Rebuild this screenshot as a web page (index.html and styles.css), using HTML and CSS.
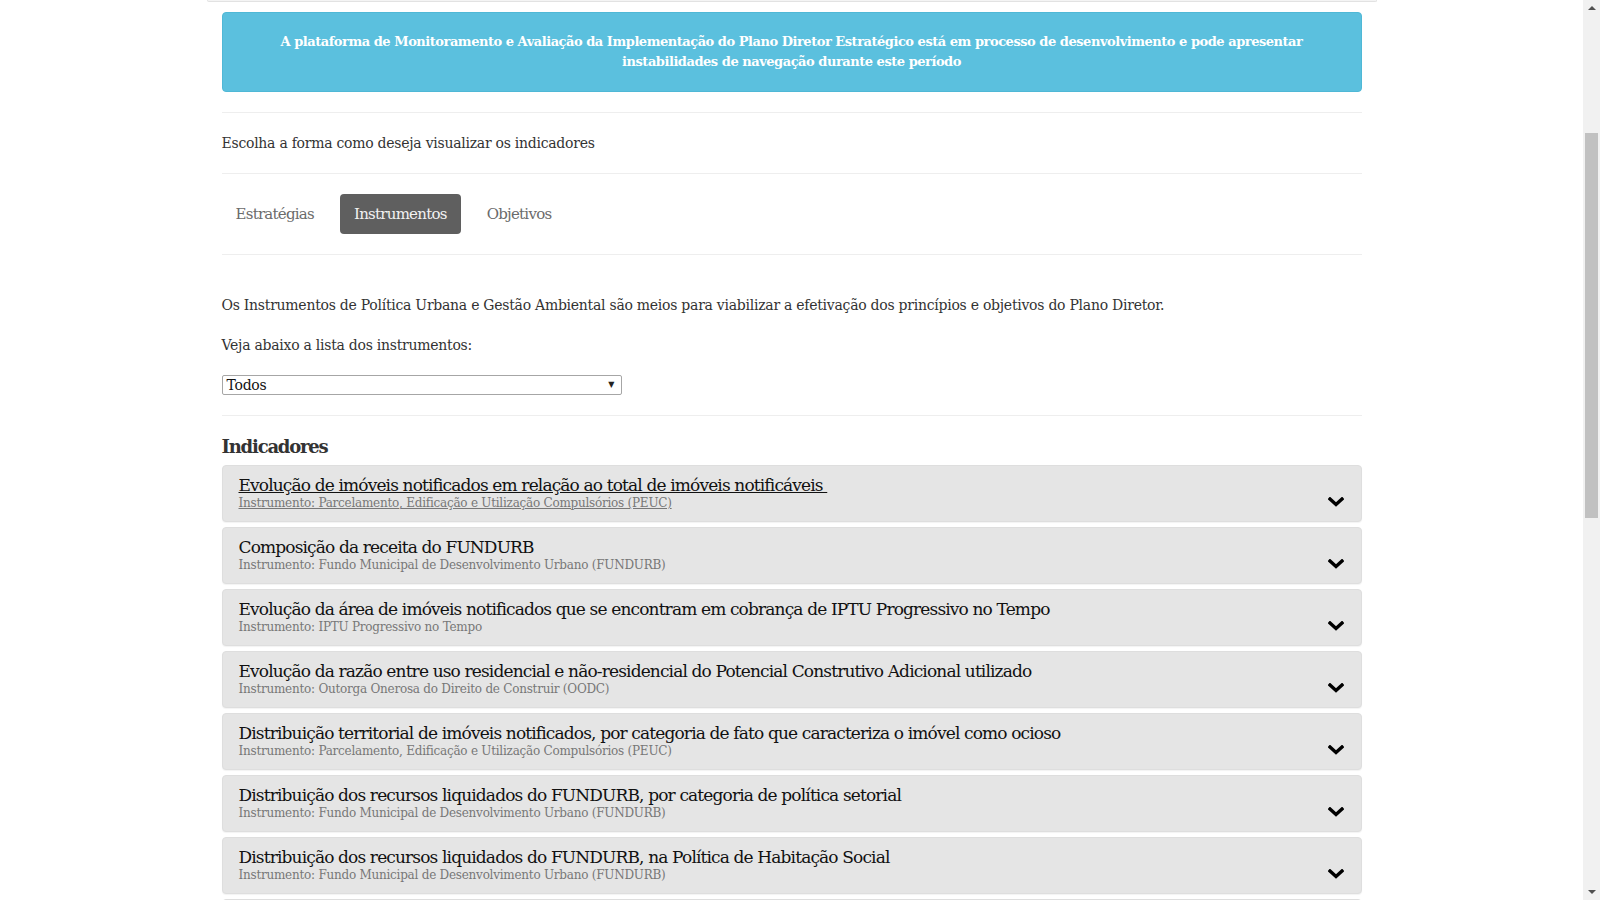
FILE: index.html
```html
<!DOCTYPE html>
<html lang="pt-BR">
<head>
<meta charset="utf-8">
<title>Monitoramento PDE</title>
<link rel="stylesheet" href="styles.css">
</head>
<body>
<div class="page">
  <main class="main">
    <div class="container">
      <div class="topline"></div>
      <div class="content">
        <div class="alert">A plataforma de Monitoramento e Avaliação da Implementação do Plano Diretor Estratégico está em processo de desenvolvimento e pode apresentar<br>instabilidades de navegação durante este período</div>
        <hr>
        <p class="lead">Escolha a forma como deseja visualizar os indicadores</p>
        <hr>
        <ul class="pills">
          <li class="pill">Estratégias</li>
          <li class="pill active">Instrumentos</li>
          <li class="pill">Objetivos</li>
        </ul>
        <hr>
        <div class="intro">
          <p>Os Instrumentos de Política Urbana e Gestão Ambiental são meios para viabilizar a efetivação dos princípios e objetivos do Plano Diretor.</p>
          <p>Veja abaixo a lista dos instrumentos:</p>
          <div class="select"><span>Todos</span><span class="caret">▼</span></div>
        </div>
        <hr>
        <h3 class="heading">Indicadores</h3>
        <div class="panels">
          <div class="panel hover">
            <div class="panel-text">
              <div class="title">Evolução de imóveis notificados em relação ao total de imóveis notificáveis&nbsp;</div>
              <div class="sub">Instrumento: Parcelamento, Edificação e Utilização Compulsórios (PEUC)</div>
            </div>
            <svg class="chev" width="16" height="10" viewBox="0 0 16 10"><polyline points="2,2 8,7.5 14,2" fill="none" stroke="#000" stroke-width="3.4" stroke-linecap="square"/></svg>
          </div>
          <div class="panel">
            <div class="panel-text">
              <div class="title">Composição da receita do FUNDURB</div>
              <div class="sub">Instrumento: Fundo Municipal de Desenvolvimento Urbano (FUNDURB)</div>
            </div>
            <svg class="chev" width="16" height="10" viewBox="0 0 16 10"><polyline points="2,2 8,7.5 14,2" fill="none" stroke="#000" stroke-width="3.4" stroke-linecap="square"/></svg>
          </div>
          <div class="panel">
            <div class="panel-text">
              <div class="title">Evolução da área de imóveis notificados que se encontram em cobrança de IPTU Progressivo no Tempo</div>
              <div class="sub">Instrumento: IPTU Progressivo no Tempo</div>
            </div>
            <svg class="chev" width="16" height="10" viewBox="0 0 16 10"><polyline points="2,2 8,7.5 14,2" fill="none" stroke="#000" stroke-width="3.4" stroke-linecap="square"/></svg>
          </div>
          <div class="panel">
            <div class="panel-text">
              <div class="title">Evolução da razão entre uso residencial e não-residencial do Potencial Construtivo Adicional utilizado</div>
              <div class="sub">Instrumento: Outorga Onerosa do Direito de Construir (OODC)</div>
            </div>
            <svg class="chev" width="16" height="10" viewBox="0 0 16 10"><polyline points="2,2 8,7.5 14,2" fill="none" stroke="#000" stroke-width="3.4" stroke-linecap="square"/></svg>
          </div>
          <div class="panel">
            <div class="panel-text">
              <div class="title">Distribuição territorial de imóveis notificados, por categoria de fato que caracteriza o imóvel como ocioso</div>
              <div class="sub">Instrumento: Parcelamento, Edificação e Utilização Compulsórios (PEUC)</div>
            </div>
            <svg class="chev" width="16" height="10" viewBox="0 0 16 10"><polyline points="2,2 8,7.5 14,2" fill="none" stroke="#000" stroke-width="3.4" stroke-linecap="square"/></svg>
          </div>
          <div class="panel">
            <div class="panel-text">
              <div class="title">Distribuição dos recursos liquidados do FUNDURB, por categoria de política setorial</div>
              <div class="sub">Instrumento: Fundo Municipal de Desenvolvimento Urbano (FUNDURB)</div>
            </div>
            <svg class="chev" width="16" height="10" viewBox="0 0 16 10"><polyline points="2,2 8,7.5 14,2" fill="none" stroke="#000" stroke-width="3.4" stroke-linecap="square"/></svg>
          </div>
          <div class="panel">
            <div class="panel-text">
              <div class="title">Distribuição dos recursos liquidados do FUNDURB, na Política de Habitação Social</div>
              <div class="sub">Instrumento: Fundo Municipal de Desenvolvimento Urbano (FUNDURB)</div>
            </div>
            <svg class="chev" width="16" height="10" viewBox="0 0 16 10"><polyline points="2,2 8,7.5 14,2" fill="none" stroke="#000" stroke-width="3.4" stroke-linecap="square"/></svg>
          </div>
          <div class="panel empty"></div>
        </div>
      </div>
    </div>
  </main>
  <div class="scrollbar">
    <div class="sb-arrow up"></div>
    <div class="sb-track"><div class="sb-thumb"></div></div>
    <div class="sb-arrow down"></div>
  </div>
</div>
</body>
</html>
```
FILE: styles.css
```css
* { box-sizing: border-box; }
html, body {
  margin: 0;
  padding: 0;
  height: 900px;
  overflow: hidden;
  background: #fff;
}
body {
  font-family: "DejaVu Serif", "Liberation Serif", serif;
  font-size: 14px;
  line-height: 20px;
  color: #333;
  letter-spacing: -0.26px;
}
.page {
  display: flex;
  height: 900px;
}
.main {
  flex: 1;
  overflow: hidden;
}
.container {
  width: 1170px;
  margin: 0 auto;
}
.topline {
  height: 2px;
  border: 1px solid #e2e2e2;
  border-top: none;
  border-radius: 0 0 2px 2px;
  background: #f4f4f4;
}
.content {
  padding: 10px 15px 0;
}
.alert {
  background: #5bc0de;
  border: 1px solid #4fb8d6;
  border-radius: 4px;
  color: #fff;
  font-weight: bold;
  font-size: 13px;
  letter-spacing: -0.47px;
  text-align: center;
  padding: 19px 15px;
  line-height: 20px;
}
hr {
  border: 0;
  border-top: 1px solid #eee;
  margin: 20px 0;
}
p { margin: 0; }
.lead { margin: 0; }
.pills {
  list-style: none;
  margin: 0;
  padding: 0;
  display: flex;
  gap: 12px;
}
.pill {
  padding: 10px 14px;
  font-size: 15px;
  line-height: 20px;
  color: #6b6b6b;
  border-radius: 4px;
  letter-spacing: -0.75px;
}
.pill.active {
  background: #5f5f5f;
  color: #f2f2f2;
}
.intro {
  padding-top: 20px;
  display: flex;
  flex-direction: column;
  gap: 20px;
}
.intro p { margin: 0; }
.select {
  width: 400px;
  height: 20px;
  border: 1px solid #a6a6a6;
  border-radius: 2px;
  display: flex;
  justify-content: space-between;
  align-items: center;
  padding: 0 6px 0 4px;
  font-size: 14px;
  color: #111;
}
.caret {
  font-size: 8px;
  color: #222;
  letter-spacing: 0;
}
.heading {
  font-size: 18px;
  font-weight: bold;
  line-height: 21px;
  margin: 20px 0 8px;
  letter-spacing: -1.2px;
  color: #333;
}
.panels {
  display: flex;
  flex-direction: column;
  gap: 5px;
}
.panel {
  display: flex;
  justify-content: space-between;
  align-items: flex-end;
  background: #e5e5e5;
  border: 1px solid #dedede;
  border-radius: 4px;
  box-shadow: 0 1px 1px rgba(0,0,0,0.05);
  padding: 10px 17px 10px 16px;
  flex-shrink: 0;
}
.panel.empty {
  height: 57px;
}
.title {
  font-size: 17px;
  line-height: 19px;
  color: #111;
  letter-spacing: -0.86px;
}
.sub {
  font-size: 12px;
  line-height: 16px;
  color: #777;
  letter-spacing: -0.24px;
}
.panel.hover .title,
.panel.hover .sub {
  text-decoration: underline;
}
.chev {
  margin-bottom: 4px;
  flex-shrink: 0;
}
.scrollbar {
  width: 17px;
  flex-shrink: 0;
  background: #f1f1f1;
  display: flex;
  flex-direction: column;
  align-items: center;
}
.sb-arrow {
  width: 0;
  height: 0;
  border-left: 4px solid transparent;
  border-right: 4px solid transparent;
  margin: 6px 0;
}
.sb-arrow.up { border-bottom: 4px solid #505050; }
.sb-arrow.down { border-top: 4px solid #505050; }
.sb-track {
  flex: 1;
  width: 100%;
  padding: 117px 2px 0;
}
.sb-thumb {
  height: 385px;
  background: #c1c1c1;
}
```
